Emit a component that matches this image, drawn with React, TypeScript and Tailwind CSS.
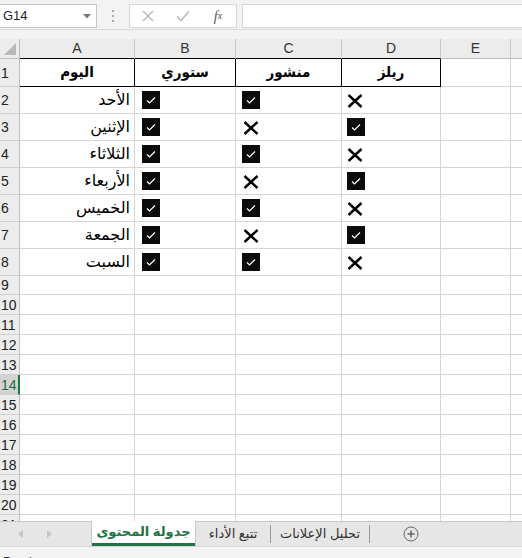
import React from "react";

const COLS = [
  { key: "A", w: "w-[115px]" },
  { key: "B", w: "w-[101px]" },
  { key: "C", w: "w-[106px]" },
  { key: "D", w: "w-[99px]" },
  { key: "E", w: "w-[70px]" },
  { key: "F", w: "w-[40px]" },
];

const days = ["الأحد", "الإثنين", "الثلاثاء", "الأربعاء", "الخميس", "الجمعة", "السبت"];
const colC = [true, false, true, false, true, false, true];
const colD = [false, true, false, true, false, true, false];

const arabic = "font-['Arial','DejaVu_Sans',sans-serif]";
const arabicCond = "font-['DejaVu_Sans_Condensed','DejaVu_Sans',sans-serif]";

function CheckBox() {
  return (
    <svg width="18" height="18" viewBox="0 0 18 18">
      <rect x="0" y="0" width="18" height="18" fill="#0b0b0b" />
      <polyline points="5,9.5 7.5,12 13,6.5" fill="none" stroke="#ffffff" strokeWidth="1.2" />
    </svg>
  );
}

function Cross() {
  return (
    <svg width="16" height="14" viewBox="0 0 16 14">
      <line x1="1.5" y1="1" x2="14.5" y2="13" stroke="#000" strokeWidth="2.4" />
      <line x1="14.5" y1="1" x2="1.5" y2="13" stroke="#000" strokeWidth="2.4" />
    </svg>
  );
}

function RowHeader({ n, h, selected }: { n: number; h: string; selected?: boolean }) {
  return (
    <div
      className={`w-[20px] shrink-0 ${h} border-b border-[#d0d0d0] flex items-center pl-[1px] text-[14px] leading-none overflow-hidden ${
        selected
          ? "bg-[#d3d3d3] text-[#1e6b40] border-r-2 border-r-[#217346]"
          : "bg-[#ececec] text-[#222] border-r border-r-[#bdbdbd]"
      }`}
    >
      {n}
    </div>
  );
}

export default function App() {
  const bodyRows = [];
  bodyRows.push(
    <div key="r1" className="flex h-[28px]">
      <RowHeader n={1} h="h-[28px]" />
      {["اليوم", "ستوري", "منشور", "ريلز"].map((t, i) => (
        <div
          key={i}
          className={`${COLS[i].w} shrink-0 h-[28px] border-r border-b border-black flex items-center justify-center text-[15px] font-bold text-black ${arabicCond}`}
        >
          {t}
        </div>
      ))}
      <div className="w-[70px] shrink-0 h-[28px] border-r border-b border-[#d4d4d4]" />
      <div className="w-[40px] shrink-0 h-[28px] border-b border-[#d4d4d4]" />
    </div>
  );
  days.forEach((d, i) => {
    bodyRows.push(
      <div key={"d" + i} className="flex h-[27px]">
        <RowHeader n={i + 2} h="h-[27px]" />
        <div className={`w-[115px] shrink-0 h-[27px] border-r border-b border-[#d4d4d4] flex items-center justify-end pr-[4px] text-[16px] text-black ${arabic}`}>
          {d}
        </div>
        <div className="w-[101px] shrink-0 h-[27px] border-r border-b border-[#d4d4d4] flex items-center pl-[7px]">
          <CheckBox />
        </div>
        <div className="w-[106px] shrink-0 h-[27px] border-r border-b border-[#d4d4d4] flex items-center pl-[6px]">
          {colC[i] ? <CheckBox /> : <div className="pl-[1px] pt-[1px]"><Cross /></div>}
        </div>
        <div className="w-[99px] shrink-0 h-[27px] border-r border-b border-[#d4d4d4] flex items-center pl-[5px]">
          {colD[i] ? <CheckBox /> : <div className="pt-[1px]"><Cross /></div>}
        </div>
        <div className="w-[70px] shrink-0 h-[27px] border-r border-b border-[#d4d4d4]" />
        <div className="w-[40px] shrink-0 h-[27px] border-b border-[#d4d4d4]" />
      </div>
    );
  });
  for (let n = 9; n <= 21; n++) {
    const h = n === 9 ? "h-[19px]" : "h-[20px]";
    bodyRows.push(
      <div key={"e" + n} className={`flex ${h}`}>
        <RowHeader n={n} h={h} selected={n === 14} />
        {COLS.map((c, i) => (
          <div
            key={c.key}
            className={`${c.w} shrink-0 ${h} border-b border-[#d4d4d4] ${i < 5 ? "border-r" : ""}`}
          />
        ))}
      </div>
    );
  }

  return (
    <div className="w-[522px] h-[558px] overflow-hidden bg-white flex flex-col font-['Liberation_Sans',sans-serif]">
      {/* formula bar */}
      <div className="h-[39px] shrink-0 bg-[#f3f3f3] flex flex-col">
        <div className="h-[30px] border-b border-[#dadada] flex items-start pt-[4px]">
          <div className="w-[97px] h-[24px] bg-white border border-l-0 border-[#c6c6c6] flex items-center justify-between pl-[3px] pr-[5px]">
            <span className="text-[13px] text-[#222]">G14</span>
            <svg width="8" height="5" viewBox="0 0 8 5">
              <polygon points="0,0 8,0 4,4.5" fill="#777" />
            </svg>
          </div>
          <div className="w-[32px] h-[24px] flex flex-col items-center justify-center gap-[3px]">
            <span className="w-[2px] h-[2px] bg-[#a8a8a8]" />
            <span className="w-[2px] h-[2px] bg-[#a8a8a8]" />
            <span className="w-[2px] h-[2px] bg-[#a8a8a8]" />
          </div>
          <div className="w-[108px] h-[24px] bg-white border border-[#d6d6d6] flex items-center">
            <div className="w-[36px] flex justify-center">
              <svg width="12" height="12" viewBox="0 0 12 12">
                <line x1="1" y1="1" x2="11" y2="11" stroke="#b4b4b4" strokeWidth="1.3" />
                <line x1="11" y1="1" x2="1" y2="11" stroke="#b4b4b4" strokeWidth="1.3" />
              </svg>
            </div>
            <div className="w-[34px] flex justify-center">
              <svg width="14" height="12" viewBox="0 0 14 12">
                <polyline points="1,6.5 5,10.5 13,1.5" fill="none" stroke="#b4b4b4" strokeWidth="1.4" />
              </svg>
            </div>
            <div className="w-[36px] flex justify-center font-['Liberation_Serif',serif] italic text-[14px] text-[#555]">
              f<span className="text-[10px] relative top-[2px]">x</span>
            </div>
          </div>
          <div className="ml-[5px] flex-1 h-[24px] bg-white border border-r-0 border-[#d6d6d6]" />
        </div>
      </div>

      {/* grid */}
      <div className="h-[482px] shrink-0 overflow-hidden">
        <div className="flex h-[20px]">
          <div className="w-[20px] shrink-0 h-[20px] bg-[#ececec] border-r border-b border-[#bdbdbd] flex items-end justify-end pr-[3px] pb-[3px]">
            <svg width="12" height="12" viewBox="0 0 12 12">
              <polygon points="12,0 12,12 0,12" fill="#b9b9b9" />
            </svg>
          </div>
          {COLS.map((c, i) => (
            <div
              key={c.key}
              className={`${c.w} shrink-0 h-[20px] bg-[#ececec] border-r border-[#c8c8c8] border-b ${
                i < 4 ? "border-b-black" : "border-b-[#bdbdbd]"
              } flex items-center justify-center text-[14px] text-[#333]`}
            >
              {c.key === "F" ? "" : c.key}
            </div>
          ))}
        </div>
        {bodyRows}
      </div>

      {/* tab bar */}
      <div className="h-[25px] shrink-0 bg-[#e6e6e6] border-t border-[#c6c6c6] flex items-stretch">
        <div className="w-[91px] flex items-center">
          <svg className="ml-[18px]" width="6" height="8" viewBox="0 0 6 8">
            <polygon points="5,0 5,8 0,4" fill="#c4c4c4" />
          </svg>
          <svg className="ml-[23px]" width="6" height="8" viewBox="0 0 6 8">
            <polygon points="0,0 0,8 5,4" fill="#c4c4c4" />
          </svg>
        </div>
        <div className="w-[105px] -mt-[1px] bg-white border-x border-[#c6c6c6] flex flex-col">
          <div className={`flex-1 flex items-center justify-center text-[13px] font-semibold text-[#217346] ${arabic}`}>
            جدولة المحتوى
          </div>
          <div className="h-[3px] bg-[#217346]" />
        </div>
        <div className={`w-[74px] flex items-center justify-center text-[13px] text-[#333] ${arabic}`}>
          تتبع الأداء
        </div>
        <div className="w-px my-[3px] bg-[#9a9a9a]" />
        <div className={`w-[98px] flex items-center justify-center text-[13px] text-[#333] ${arabic}`}>
          تحليل الإعلانات
        </div>
        <div className="w-px my-[3px] bg-[#9a9a9a]" />
        <div className="w-[82px] flex items-center justify-center">
          <svg width="16" height="16" viewBox="0 0 16 16">
            <circle cx="8" cy="8" r="7" fill="none" stroke="#666" strokeWidth="1" />
            <line x1="8" y1="4.5" x2="8" y2="11.5" stroke="#555" strokeWidth="1.3" />
            <line x1="4.5" y1="8" x2="11.5" y2="8" stroke="#555" strokeWidth="1.3" />
          </svg>
        </div>
        <div className="flex-1" />
      </div>

      {/* status bar */}
      <div className="flex-1 bg-[#f3f3f3] border-t border-[#d6d6d6] overflow-hidden pl-[3px] pt-[8px] text-[12px] leading-[14px] text-[#333]">
        Ready
      </div>
    </div>
  );
}
